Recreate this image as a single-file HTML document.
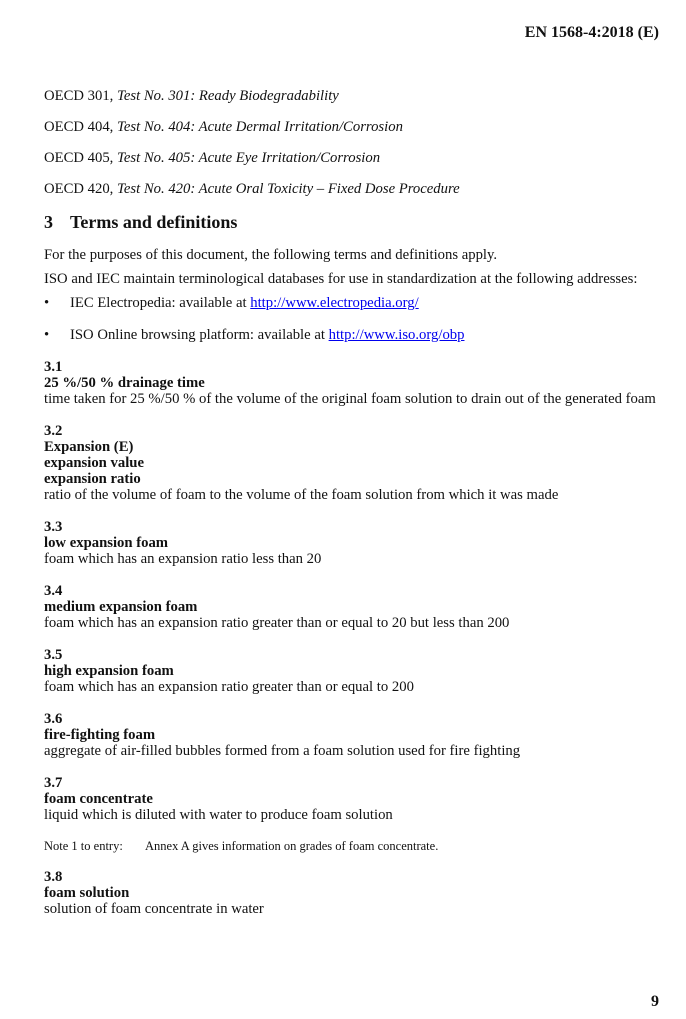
<!DOCTYPE html>
<html><head><meta charset="utf-8"><style>
body{margin:0;width:686px;height:1019px;background:#fff;position:relative;font-family:"Liberation Serif",serif;font-size:14.7px;color:#111;}
.l{position:absolute;left:44px;line-height:16px;white-space:nowrap;}
b{font-weight:bold}
a{color:#0000ee;text-decoration:underline}
.r{position:absolute;right:27px;font-weight:bold;line-height:16px}
</style></head><body>
<div class="r" style="top:25px;font-size:16px">EN 1568-4:2018 (E)</div>
<div class="l" style="top:88px">OECD 301, <i>Test No. 301: Ready Biodegradability</i></div>
<div class="l" style="top:119px">OECD 404, <i>Test No. 404: Acute Dermal Irritation/Corrosion</i></div>
<div class="l" style="top:150px">OECD 405, <i>Test No. 405: Acute Eye Irritation/Corrosion</i></div>
<div class="l" style="top:181px">OECD 420, <i>Test No. 420: Acute Oral Toxicity – Fixed Dose Procedure</i></div>
<div class="l" style="top:212px;font-size:18px;line-height:20px;font-weight:bold">3<span style="position:absolute;left:26px">Terms and definitions</span></div>
<div class="l" style="top:247px">For the purposes of this document, the following terms and definitions apply.</div>
<div class="l" style="top:271px">ISO and IEC maintain terminological databases for use in standardization at the following addresses:</div>
<div class="l" style="top:295px">•<span style="position:absolute;left:26px">IEC Electropedia: available at <a>http://www.electropedia.org/</a></span></div>
<div class="l" style="top:327px">•<span style="position:absolute;left:26px">ISO Online browsing platform: available at <a>http://www.iso.org/obp</a></span></div>
<div class="l" style="top:359px"><b>3.1</b><br><b>25 %/50 % drainage time</b><br>time taken for 25 %/50 % of the volume of the original foam solution to drain out of the generated foam</div>
<div class="l" style="top:423px"><b>3.2</b><br><b>Expansion (E)</b><br><b>expansion value</b><br><b>expansion ratio</b><br>ratio of the volume of foam to the volume of the foam solution from which it was made</div>
<div class="l" style="top:519px"><b>3.3</b><br><b>low expansion foam</b><br>foam which has an expansion ratio less than 20</div>
<div class="l" style="top:583px"><b>3.4</b><br><b>medium expansion foam</b><br>foam which has an expansion ratio greater than or equal to 20 but less than 200</div>
<div class="l" style="top:647px"><b>3.5</b><br><b>high expansion foam</b><br>foam which has an expansion ratio greater than or equal to 200</div>
<div class="l" style="top:711px"><b>3.6</b><br><b>fire-fighting foam</b><br>aggregate of air-filled bubbles formed from a foam solution used for fire fighting</div>
<div class="l" style="top:775px"><b>3.7</b><br><b>foam concentrate</b><br>liquid which is diluted with water to produce foam solution</div>
<div class="l" style="top:838px;font-size:12.5px">Note 1 to entry:<span style="position:absolute;left:101px">Annex A gives information on grades of foam concentrate.</span></div>
<div class="l" style="top:869px"><b>3.8</b><br><b>foam solution</b><br>solution of foam concentrate in water</div>
<div class="r" style="top:994px;font-size:16px">9</div>
</body></html>
